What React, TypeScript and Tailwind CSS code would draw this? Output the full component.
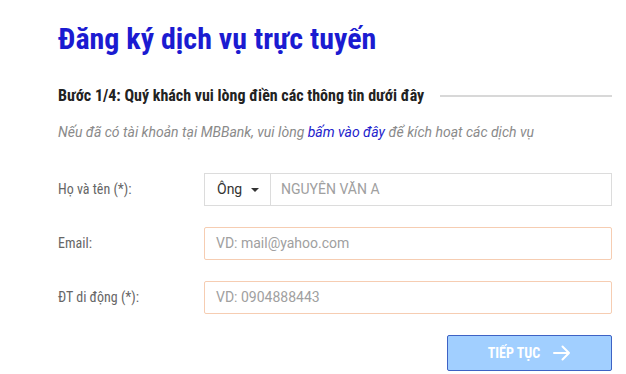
import React from "react";

const cond = { fontFamily: '"Roboto Condensed", "Liberation Sans Narrow", Roboto, sans-serif' };

export default function App() {
  return (
    <div className="w-[626px] h-[374px] bg-white overflow-hidden pl-[58px] pr-[14px] pt-[21px] font-['Roboto',sans-serif]">
      <h1 style={cond} className="text-[30px] leading-[36px] font-bold text-[#1b1bd1]">
        Đăng ký dịch vụ trực tuyến
      </h1>
      <div className="mt-[29px] flex items-center h-[20px]">
        <span style={cond} className="text-[16px] font-bold text-[#222] whitespace-nowrap">
          Bước 1/4: Quý khách vui lòng điền các thông tin dưới đây
        </span>
        <div className="ml-[16px] flex-1 h-[2px] bg-[#d8d8d8]" />
      </div>
      <p className="mt-[16px] h-[20px] leading-[20px] text-[14px] italic text-[#8a8a8a] whitespace-nowrap">
        Nếu đã có tài khoản tại MBBank, vui lòng <span className="text-[#2222cc]">bấm vào đây</span> để kích hoạt các dịch vụ
      </p>
      <div className="mt-[31px] flex flex-col gap-[21px]">
        <div className="flex items-center">
          <label style={cond} className="w-[146px] text-[14px] text-[#666]">Họ và tên (*):</label>
          <div className="flex-1 h-[33px] flex border border-[#dcdcdc]">
            <div className="w-[66px] border-r border-[#dcdcdc] flex items-center pl-[12px] gap-[9px] text-[14px] text-[#333]">
              <span>Ông</span>
              <span className="w-0 h-0 border-l-[4px] border-r-[4px] border-t-[4px] border-l-transparent border-r-transparent border-t-[#333]" />
            </div>
            <div className="flex-1 flex items-center pl-[10px] text-[14px] text-[#a0a0a0]">NGUYÊN VĂN A</div>
          </div>
        </div>
        <div className="flex items-center">
          <label style={cond} className="w-[146px] text-[14px] text-[#666]">Email:</label>
          <div className="flex-1 h-[33px] flex items-center border border-[#f6cdb2] rounded-[2px] pl-[11px] text-[14px] text-[#a0a0a0]">
            VD: mail@yahoo.com
          </div>
        </div>
        <div className="flex items-center">
          <label style={cond} className="w-[146px] text-[14px] text-[#666]">ĐT di động (*):</label>
          <div className="flex-1 h-[33px] flex items-center border border-[#f6cdb2] rounded-[2px] pl-[11px] text-[14px] text-[#a0a0a0]">
            VD: 0904888443
          </div>
        </div>
        <div className="flex justify-end">
          <button className="w-[165px] h-[36px] bg-[#a1cfff] border border-[#3e62c4] rounded-[2px] flex items-center justify-center gap-[13px] text-white">
            <span style={cond} className="text-[14px] font-bold">TIẾP TỤC</span>
            <svg width="18" height="16" viewBox="0 0 18 16" fill="none" stroke="white" strokeWidth="2" strokeLinecap="round" strokeLinejoin="round">
              <path d="M1 8h15M9.5 1.5 16 8l-6.5 6.5" />
            </svg>
          </button>
        </div>
      </div>
    </div>
  );
}
